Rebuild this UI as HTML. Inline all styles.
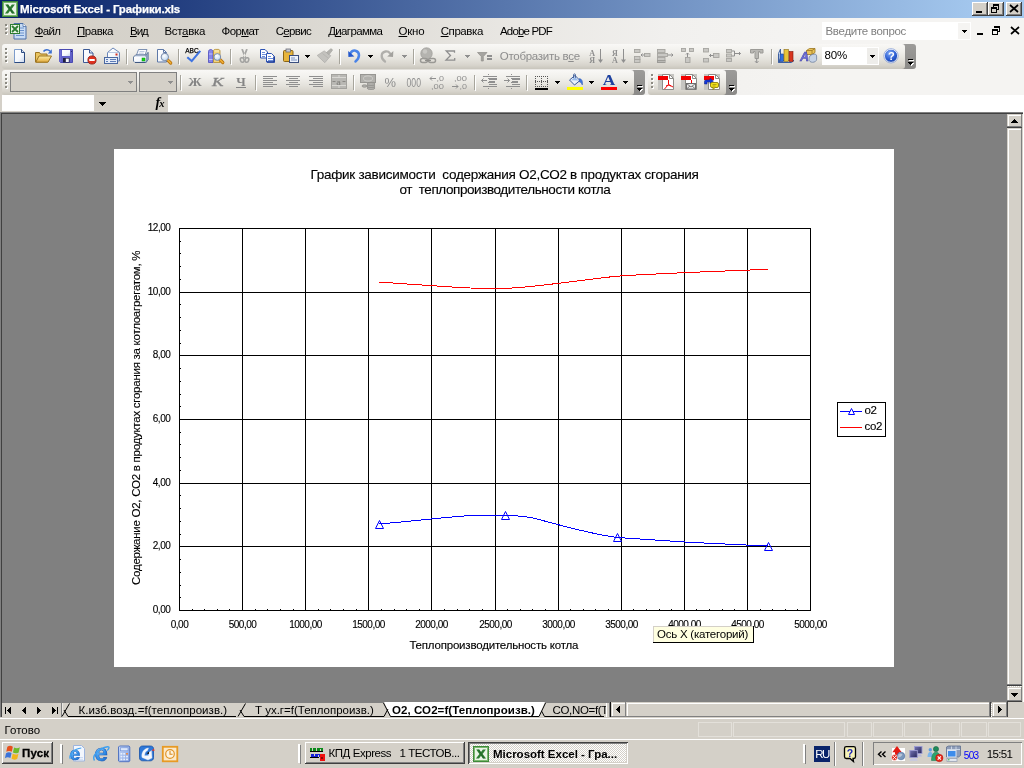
<!DOCTYPE html>
<html lang="ru"><head><meta charset="utf-8"><title>Microsoft Excel - Графики.xls</title>
<style>
html,body{margin:0;padding:0;background:#D4D0C8;}
body{width:1024px;height:768px;overflow:hidden;font-family:"Liberation Sans",sans-serif;font-size:11px;}
#screen{will-change:transform;position:relative;width:1024px;height:768px;overflow:hidden;background:#D4D0C8;}
.a{position:absolute;}
.t{position:absolute;white-space:pre;color:#000;}
.t u{text-decoration:underline;text-underline-offset:1px;}
svg{position:absolute;overflow:visible;}
.ico{position:absolute;width:16px;height:16px;}
.sep{position:absolute;width:1px;background:#A6A398;box-shadow:1px 0 0 #fff;}
.tb{position:absolute;border-radius:3px;background:linear-gradient(#F9F8F6 0%,#F1F0EC 30%,#E5E3DD 60%,#D7D4CC 85%,#C8C5BC 100%);}
.cap{position:absolute;background:linear-gradient(#9C9B99,#8B8A88);border-radius:0 3px 3px 0;}
.grip{position:absolute;width:2px;}
.btn{position:absolute;background:#D4D0C8;box-shadow:inset -1px -1px 0 #404040,inset 1px 1px 0 #fff,inset -2px -2px 0 #808080,inset 2px 2px 0 #D4D0C8;}
.sunk{position:absolute;box-shadow:inset 1px 1px 0 #808080,inset -1px -1px 0 #fff;}

</style></head>
<body>
<div id="screen">
<div class="a" id="titlebar" style="left:0;top:0;width:1024px;height:18px;background:linear-gradient(90deg,#0A246A 0%,#0A246A 2%,#A6CAF0 97%,#A6CAF0 100%);"></div>
<svg style="left:2px;top:1px" width="16" height="16" viewBox="0 0 16 16"><rect x="0" y="0" width="16" height="16" fill="#3E8A3A"/><rect x="1" y="1" width="14" height="14" fill="#7DB870"/><rect x="2" y="2" width="12" height="12" fill="#EAF4E6"/><path d="M3.2 3.5h3l1.8 2.6 1.9-2.6h3L9.6 8l3.5 4.5h-3.1L8 9.8l-2 2.7H2.9L6.4 8z" fill="#2E7D32"/><path d="M4.5 3.5h1.7l5.6 9H10z" fill="#1B5E20" opacity=".55"/></svg>
<span class="t" style="left:20.00px;top:2.20px;font-size:11.5px;line-height:14px;font-weight:bold;color:#fff;letter-spacing:-0.129px;-webkit-text-stroke:0.25px #fff;">Microsoft Excel - Графики.xls</span>
<div class="btn" style="left:972px;top:2px;width:16px;height:14px;"></div>
<div class="btn" style="left:988px;top:2px;width:16px;height:14px;"></div>
<div class="btn" style="left:1006px;top:2px;width:16px;height:14px;"></div>
<svg style="left:972px;top:2px" width="50" height="14" viewBox="0 0 50 14" shape-rendering="crispEdges"><rect x="4" y="9" width="6" height="2" fill="#000"/><path d="M21 2h6v2h-6zM21 4h1v2h-1zM26 4h1v4h-1zM25 7h1v1h-1z M19 5h6v2h-6z M19 7h1v4h-1zM24 7h1v4h-1zM19 10h6v1h-6z" fill="#000"/></svg>
<svg style="left:1006px;top:2px" width="16" height="14" viewBox="0 0 16 14"><path d="M4 3l8 7M12 3l-8 7" stroke="#000" stroke-width="1.7" fill="none"/></svg>
<div class="a" id="dock" style="left:0;top:18px;width:1024px;height:77px;background:linear-gradient(90deg,#D4D0C8 0%,#D7D4CD 25%,#E9E7E3 50%,#F1F0EE 65%,#F5F4F2 80%,#F5F4F2 100%);"></div>
<svg style="left:5px;top:24px" width="3" height="12" viewBox="0 0 3 12" shape-rendering="crispEdges"><g fill="#fff"><rect x="1" y="1" width="2" height="2"/><rect x="1" y="5" width="2" height="2"/><rect x="1" y="9" width="2" height="2"/></g><g fill="#8C8A82"><rect x="0" y="0" width="2" height="2"/><rect x="0" y="4" width="2" height="2"/><rect x="0" y="8" width="2" height="2"/></g></svg>
<svg style="left:10px;top:22px" width="17" height="18" viewBox="0 0 17 18"><path d="M4 1.5h9l3 3V17H4z" fill="#C9DCF5" stroke="#4A6FA8" stroke-width="1"/><path d="M13 1.5v3h3" fill="#fff" stroke="#4A6FA8" stroke-width=".8"/><path d="M9 6h5M9 8.5h5M9 11h5M6 13.5h8" stroke="#6C93CC" stroke-width="1"/><rect x=".5" y="2.5" width="9" height="9" fill="#EAF4E6" stroke="#2E7D32" stroke-width="1"/><path d="M2 4l6 6M8 4l-6 6" stroke="#2E7D32" stroke-width="1.8"/></svg>
<span class="t" style="left:34.75px;top:24.20px;font-size:11.5px;line-height:14px;letter-spacing:-0.691px;"><u>Ф</u>айл</span>
<span class="t" style="left:77.00px;top:24.20px;font-size:11.5px;line-height:14px;letter-spacing:-0.471px;"><u>П</u>равка</span>
<span class="t" style="left:130.00px;top:24.20px;font-size:11.5px;line-height:14px;letter-spacing:-1.032px;"><u>В</u>ид</span>
<span class="t" style="left:164.50px;top:24.20px;font-size:11.5px;line-height:14px;letter-spacing:-0.319px;">Вст<u>а</u>вка</span>
<span class="t" style="left:221.60px;top:24.20px;font-size:11.5px;line-height:14px;letter-spacing:-0.624px;">Фор<u>м</u>ат</span>
<span class="t" style="left:275.70px;top:24.20px;font-size:11.5px;line-height:14px;letter-spacing:-0.679px;">С<u>е</u>рвис</span>
<span class="t" style="left:328.20px;top:24.20px;font-size:11.5px;line-height:14px;letter-spacing:-0.652px;">Д<u>и</u>аграмма</span>
<span class="t" style="left:398.50px;top:24.20px;font-size:11.5px;line-height:14px;letter-spacing:-0.226px;"><u>О</u>кно</span>
<span class="t" style="left:440.70px;top:24.20px;font-size:11.5px;line-height:14px;letter-spacing:-0.416px;"><u>С</u>правка</span>
<span class="t" style="left:500.00px;top:24.20px;font-size:11.5px;line-height:14px;letter-spacing:-0.826px;">Ado<u>b</u>e PDF</span>
<div class="a" style="left:822px;top:22px;width:149px;height:18px;background:#fff;"></div>
<div class="a" style="left:958px;top:23px;width:12px;height:16px;background:#F5F4F2;"></div>
<span class="t" style="left:825.50px;top:24.20px;font-size:11.5px;line-height:14px;color:#808080;letter-spacing:-0.306px;">Введите вопрос</span>
<svg style="left:962px;top:30px" width="5" height="3" viewBox="0 0 5 3" shape-rendering="crispEdges"><path d="M0 0h5v1H0zM1 1h3v1H1zM2 2h1v1H2z" fill="#000"/></svg>
<svg style="left:974px;top:24px" width="48" height="14" viewBox="0 0 48 14" shape-rendering="crispEdges"><rect x="3" y="9" width="6" height="2" fill="#000"/><path d="M20 2h6v2h-6zM25 4h1v4h-1zM24 7h1v1h-1z M18 5h6v2h-6z M18 7h1v4h-1zM23 7h1v4h-1zM18 10h6v1h-6z" fill="#000"/></svg>
<svg style="left:1010px;top:26px" width="10" height="9" viewBox="0 0 10 9"><path d="M1 1l8 7M9 1l-8 7" stroke="#000" stroke-width="1.7" fill="none"/></svg>
<div class="cap" style="left:902px;top:44px;width:14px;height:25px;"></div>
<div class="tb" style="left:2px;top:44px;width:903px;height:25px;"></div>
<div class="cap" style="left:631px;top:70px;width:14px;height:25px;"></div>
<div class="tb" style="left:2px;top:70px;width:632px;height:25px;"></div>
<div class="cap" style="left:723px;top:70px;width:14px;height:25px;"></div>
<div class="tb" style="left:648px;top:70px;width:78px;height:25px;"></div>
<svg style="left:908px;top:59px" width="7" height="8" viewBox="0 0 7 8" shape-rendering="crispEdges"><path d="M1 1h5v1H1z" fill="#fff"/><path d="M0 0h5v1H0z" fill="#000"/><path d="M1 4h5v1H1zM2 5h3v1H2zM3 6h1v1H3z" fill="#fff"/><path d="M0 3h5v1H0zM1 4h3v1H1zM2 5h1v1H2z" fill="#000"/></svg>
<svg style="left:637px;top:85px" width="7" height="8" viewBox="0 0 7 8" shape-rendering="crispEdges"><path d="M1 1h5v1H1z" fill="#fff"/><path d="M0 0h5v1H0z" fill="#000"/><path d="M1 4h5v1H1zM2 5h3v1H2zM3 6h1v1H3z" fill="#fff"/><path d="M0 3h5v1H0zM1 4h3v1H1zM2 5h1v1H2z" fill="#000"/></svg>
<svg style="left:729px;top:85px" width="7" height="8" viewBox="0 0 7 8" shape-rendering="crispEdges"><path d="M1 1h5v1H1z" fill="#fff"/><path d="M0 0h5v1H0z" fill="#000"/><path d="M1 4h5v1H1zM2 5h3v1H2zM3 6h1v1H3z" fill="#fff"/><path d="M0 3h5v1H0zM1 4h3v1H1zM2 5h1v1H2z" fill="#000"/></svg>
<svg style="left:5px;top:48px" width="3" height="16" viewBox="0 0 3 16" shape-rendering="crispEdges"><g fill="#fff"><rect x="1" y="1" width="2" height="2"/><rect x="1" y="5" width="2" height="2"/><rect x="1" y="9" width="2" height="2"/><rect x="1" y="13" width="2" height="2"/></g><g fill="#8C8A82"><rect x="0" y="0" width="2" height="2"/><rect x="0" y="4" width="2" height="2"/><rect x="0" y="8" width="2" height="2"/><rect x="0" y="12" width="2" height="2"/></g></svg>
<svg style="left:5px;top:74px" width="3" height="16" viewBox="0 0 3 16" shape-rendering="crispEdges"><g fill="#fff"><rect x="1" y="1" width="2" height="2"/><rect x="1" y="5" width="2" height="2"/><rect x="1" y="9" width="2" height="2"/><rect x="1" y="13" width="2" height="2"/></g><g fill="#8C8A82"><rect x="0" y="0" width="2" height="2"/><rect x="0" y="4" width="2" height="2"/><rect x="0" y="8" width="2" height="2"/><rect x="0" y="12" width="2" height="2"/></g></svg>
<svg style="left:651px;top:74px" width="3" height="16" viewBox="0 0 3 16" shape-rendering="crispEdges"><g fill="#fff"><rect x="1" y="1" width="2" height="2"/><rect x="1" y="5" width="2" height="2"/><rect x="1" y="9" width="2" height="2"/><rect x="1" y="13" width="2" height="2"/></g><g fill="#8C8A82"><rect x="0" y="0" width="2" height="2"/><rect x="0" y="4" width="2" height="2"/><rect x="0" y="8" width="2" height="2"/><rect x="0" y="12" width="2" height="2"/></g></svg>
<div class="a" style="left:0;top:95px;width:1024px;height:17px;background:#D4D0C8;"></div>
<div class="a" style="left:2px;top:95px;width:92px;height:16px;background:#fff;"></div>
<div class="a" style="left:168px;top:95px;width:856px;height:17px;background:#fff;"></div>
<svg style="left:99px;top:102px" width="7" height="4" viewBox="0 0 7 4" shape-rendering="crispEdges"><path d="M0 0h7v1H0zM1 1h5v1H1zM2 2h3v1H2zM3 3h1v1H3z" fill="#000"/></svg>
<svg style="left:150px;top:95px" width="20" height="16" viewBox="150 95 20 16"><text x="155.500" y="106.500" font-family="Liberation Serif,serif" font-style="italic" font-weight="bold" font-size="14" fill="#000">f</text><text x="159.300" y="106.800" font-family="Liberation Serif,serif" font-style="italic" font-weight="bold" font-size="10.500" fill="#000">x</text></svg>
<div class="a" id="ws" style="left:0;top:112px;width:1024px;height:607px;background:#D4D0C8;"></div>
<div class="a" style="left:0;top:112px;width:1007px;height:591px;background:#808080;"></div>
<div class="a" style="left:0;top:112px;width:1023px;height:1px;background:#808080;"></div><div class="a" style="left:1px;top:113px;width:1022px;height:1px;background:#404040;"></div>
<div class="a" style="left:1px;top:113px;width:1px;height:590px;background:#404040;"></div>
<svg id="icons" style="left:0;top:44px" width="1024" height="52" viewBox="0 44 1024 52"><defs><linearGradient id="gPage" x1="0" y1="0" x2="1" y2="1"><stop offset="0" stop-color="#fff"/><stop offset=".6" stop-color="#F4F7FC"/><stop offset="1" stop-color="#C4D3EC"/></linearGradient><linearGradient id="gFold" x1="0" y1="0" x2="0" y2="1"><stop offset="0" stop-color="#FDEFA8"/><stop offset="1" stop-color="#E2A93A"/></linearGradient><linearGradient id="gBlue" x1="0" y1="0" x2="0" y2="1"><stop offset="0" stop-color="#8FB4F0"/><stop offset="1" stop-color="#2858C0"/></linearGradient><linearGradient id="gGray" x1="0" y1="0" x2="0" y2="1"><stop offset="0" stop-color="#C2C1BD"/><stop offset="1" stop-color="#8E8D89"/></linearGradient><radialGradient id="gHelp" cx=".4" cy=".3" r=".8"><stop offset="0" stop-color="#7FA8F5"/><stop offset=".6" stop-color="#2A5BD0"/><stop offset="1" stop-color="#123A9C"/></radialGradient><radialGradient id="gLens" cx=".4" cy=".35" r=".7"><stop offset="0" stop-color="#fff"/><stop offset="1" stop-color="#B9D3EE"/></radialGradient></defs><path d="M14.5 49.5h7l3 3v10h-10z" fill="url(#gPage)" stroke="#7D9CCB" stroke-width="1"/><path d="M21.5 49.500l3 3v10h-10" fill="none" stroke="#2B4A80" stroke-width="1"/><path d="M21.5 49.500v3h3" fill="#DCE6F7" stroke="#2B4A80" stroke-width="1"/><path d="M35.5 62V52.5h4l1 1.5h6.5v8z" fill="#E9C460" stroke="#9C7420" stroke-width="1"/><path d="M35.8 62.2l3.2-6.2h12.5l-3.5 6.2z" fill="url(#gFold)" stroke="#9C7420" stroke-width="1"/><path d="M43.5 51.5c1.6-2.2 4.8-2.4 6.6-.2" fill="none" stroke="#3B6FD0" stroke-width="1.5"/><path d="M51.8 49.3v4.2h-4z" fill="#3B6FD0"/><path d="M59.500 49.500h13v13h-12l-1-1z" fill="#6060C8" stroke="#4A4AB2" stroke-width="1"/><path d="M60 62v-12" stroke="#7C7CE0" stroke-width="1"/><rect x="62" y="50" width="8" height="6" fill="url(#gPage)"/><rect x="63" y="58" width="6.500" height="4.500" fill="#1E1E3C"/><rect x="65.800" y="58.600" width="3" height="3.400" fill="#F4F6FC"/><rect x="71" y="51" width="1" height="1" fill="#2A2A70"/><path d="M83.5 49.5h6l3.5 3.5v9.5h-9.5z" fill="url(#gPage)" stroke="#3C5A96" stroke-width="1"/><path d="M89.5 49.5v3.5h3.5" fill="#DCE6F7" stroke="#3C5A96" stroke-width="1"/><circle cx="92" cy="60" r="4.1" fill="#E0301E" stroke="#8E1A10" stroke-width=".8"/><rect x="89.3" y="59" width="5.4" height="2" fill="#fff"/><path d="M107.500 52.500l5.500-4.500 6.500 4.500v8.500h-12z" fill="url(#gPage)" stroke="#6B86B8" stroke-width="1"/><path d="M107.500 52.500h12" fill="none" stroke="#9DB2D6" stroke-width=".7"/><rect x="115.500" y="53.500" width="2" height="2" fill="#D83020"/><rect x="104.500" y="57.500" width="13" height="6" fill="#E4ECF8" stroke="#4A68A0" stroke-width="1"/><path d="M106 59.500h2M106 61.500h2M110 59.500h6M110 61.500h6" stroke="#5E7CB8" stroke-width="1"/><rect x="126" y="49" width="1" height="15" fill="#A7A59C"/><rect x="127" y="50" width="1" height="15" fill="#fff"/><path d="M136.500 55l2-5.500h8.500l-2 5.500z" fill="#FBFCFE" stroke="#6F86AC" stroke-width=".9"/><path d="M139.500 51.500h5M138.800 53.200h5" stroke="#A9B9D6" stroke-width=".8"/><path d="M133.500 57l2-2h10.500l2-2.500v7l-2 3h-11l-1.500-1.500z" fill="#DCE5F3" stroke="#566E94" stroke-width=".9"/><path d="M146 55v7.500l2-3v-7z" fill="#9FB1CF" stroke="#566E94" stroke-width=".6"/><path d="M134 57h12v4.500h-12z" fill="url(#gPage)"/><rect x="142" y="58" width="3" height="3" fill="#14DC14" stroke="#0A8C0A" stroke-width=".5"/><path d="M135 62.500h10" stroke="#3F5880" stroke-width="1"/><path d="M157.5 49.5h6l3 3v9.500h-9z" fill="url(#gPage)" stroke="#5E79A8" stroke-width="1"/><path d="M163.500 49.500v3h3" fill="none" stroke="#5E79A8" stroke-width="1"/><path d="M167.500 59.800l3.200 3.200" stroke="#B8720E" stroke-width="3.200" stroke-linecap="round"/><path d="M167.500 59.800l3.200 3.200" stroke="#F2B236" stroke-width="1.600" stroke-linecap="round"/><circle cx="164.800" cy="57" r="3.700" fill="url(#gLens)" stroke="#7B8CAA" stroke-width="1"/><rect x="178" y="49" width="1" height="15" fill="#A7A59C"/><rect x="179" y="50" width="1" height="15" fill="#fff"/><text x="185.200" y="52.600" font-family="Liberation Sans,sans-serif" font-size="6.800" fill="#000" stroke="#000" stroke-width=".25" textLength="13.500" lengthAdjust="spacingAndGlyphs">ABC</text><path d="M187.300 57.300l4.400 3.800 8.600-10.300" fill="none" stroke="#3F74E2" stroke-width="2.100" stroke-linejoin="miter"/><path d="M208.500 51.500c0-1.200 1-2 2.200-2s2.300.8 2.300 2v11h-4.500z" fill="#8686EA" stroke="#4A4ABC" stroke-width=".8"/><path d="M209 54h3.500M209 59.500h3.500" stroke="#C4C4FA" stroke-width="1.100"/><path d="M213.500 51c0-1 .8-1.600 1.800-1.600h2.800c1 0 1.900.6 1.900 1.600v11.500h-6.500z" fill="#F3D47C" stroke="#B18B30" stroke-width=".8"/><path d="M214.500 51h4.500" stroke="#FBEFC4" stroke-width="1"/><path d="M219.800 59.500l3 3" stroke="#B8720E" stroke-width="3.200" stroke-linecap="round"/><path d="M219.800 59.500l3 3" stroke="#F2B236" stroke-width="1.600" stroke-linecap="round"/><circle cx="217.300" cy="57" r="3.400" fill="url(#gLens)" stroke="#7B8CAA" stroke-width="1"/><rect x="230" y="49" width="1" height="15" fill="#A7A59C"/><rect x="231" y="50" width="1" height="15" fill="#fff"/><path d="M241.200 49.300l1.800-.300 3.200 8.500-1.400 1zM247.800 49.300l-1.800-.300-3.200 8.500 1.400 1z" fill="#A6A6A4"/><g fill="none" stroke="#A2A2A0" stroke-width="1.500"><ellipse cx="242.200" cy="60" rx="1.800" ry="2.300" transform="rotate(-18 242.200 60)"/><ellipse cx="246.900" cy="60" rx="1.800" ry="2.300" transform="rotate(18 246.900 60)"/></g><path d="M260.500 49.500h4.500l2.500 2.500v6h-7z" fill="#fff" stroke="#2E54B4" stroke-width="1"/><path d="M262 52.500h3M262 54.500h4M262 56.500h3" stroke="#5D83D8" stroke-width=".9"/><path d="M266.500 53.500h5l3 3v5.500h-8z" fill="#fff" stroke="#2E54B4" stroke-width="1"/><path d="M274 56.500v5.500h-7" fill="none" stroke="#1C3C9C" stroke-width="1.600"/><path d="M268 56.500h3M268 58.500h5M268 60.500h5" stroke="#5D83D8" stroke-width=".9"/><rect x="283.500" y="50.500" width="9.500" height="11" rx="1" fill="#E7B53C" stroke="#8B6516" stroke-width="1"/><rect x="286" y="49" width="4.500" height="3" fill="#C9CBD3" stroke="#6A6C78" stroke-width=".8"/><rect x="289.500" y="55.500" width="9" height="7" fill="#EEF3FB" stroke="#3A4E7E" stroke-width="1"/><path d="M291 58h4M291 60h6" stroke="#6C86B8" stroke-width=".9"/><path d="M305 55h5v1h-5zM306 56h3v1h-3zM307 57h1v1h-1z" fill="#000" shape-rendering="crispEdges"/><path d="M317.200 55.500l7-4.600 6.600 4.800-6 7z" fill="#C3C2BE" stroke="#ACABA7" stroke-width=".7"/><path d="M326.500 52.500l4-3.500c.8-.6 2.300.6 1.800 1.500l-3.300 4.200z" fill="#B3B2AE" stroke="#A3A29E" stroke-width=".6"/><path d="M322.500 53.500l5.500 4.500" stroke="#B0AFAB" stroke-width=".7"/><rect x="339" y="49" width="1" height="15" fill="#A7A59C"/><rect x="340" y="50" width="1" height="15" fill="#fff"/><path d="M355.500 61.500c4.500-3.500 4.800-9.500 0-10.800-2-.5-3.800.5-5 2.500" fill="none" stroke="#4A84E8" stroke-width="2.500" stroke-linecap="round"/><path d="M348.200 51l.2 5.900 6-.3z" fill="#2458CC"/><path d="M368 55h5v1h-5zM369 56h3v1h-3zM370 57h1v1h-1z" fill="#000" shape-rendering="crispEdges"/><path d="M385 61.500c-4.500-3-4.500-9 .5-10 2-.3 3.500.4 4.500 1.800" fill="none" stroke="#B0AFAB" stroke-width="2.300" stroke-linecap="round"/><path d="M393.400 51l-.4 6-5.800-.4z" fill="#A3A29E"/><path d="M402 55h5v1h-5zM403 56h3v1h-3zM404 57h1v1h-1z" fill="#8F8F8F" shape-rendering="crispEdges"/><rect x="413" y="49" width="1" height="15" fill="#A7A59C"/><rect x="414" y="50" width="1" height="15" fill="#fff"/><circle cx="426.500" cy="53.500" r="5.700" fill="#B4B3AF" stroke="#9F9E9A" stroke-width=".8"/><circle cx="425" cy="51.500" r="2.200" fill="#C9C8C4"/><g fill="none" stroke="#9A9995" stroke-width="1.500"><rect x="420.500" y="58.500" width="7" height="4" rx="2"/><rect x="428.500" y="58.500" width="7" height="4" rx="2"/></g><path d="M425 60.500h6" stroke="#8F8E8A" stroke-width="1.300"/><path d="M454.500 52.800v-1.800h-8.300l4.300 4.500-4.500 4.600h8.700v-2" fill="none" stroke="#8F8F8F" stroke-width="1.300"/><path d="M465 55h5v1h-5zM466 56h3v1h-3zM467 57h1v1h-1z" fill="#8F8F8F" shape-rendering="crispEdges"/><path d="M477.500 52.500h9.500l-3.700 4v4.500h-2v-4.500z" fill="#A5A4A0" stroke="#8F8E8A" stroke-width=".7"/><path d="M487 56h5M487 59h5" stroke="#8F8F8F" stroke-width="1.800"/><g font-family="Liberation Serif,serif" font-weight="bold" font-size="8" fill="#8F8F8F"><text x="589.300" y="55.600">А</text><text x="589.300" y="63.200">Я</text><text x="612" y="55.600">Я</text><text x="612" y="63.200">А</text></g><g stroke="#8F8F8F" stroke-width="1" fill="#8F8F8F"><path d="M600.500 49v12"/><path d="M598 59.500h5l-2.500 3.500z" stroke="none"/><path d="M623.500 49v12"/><path d="M621 59.500h5l-2.500 3.500z" stroke="none"/></g><rect x="634.5" y="49.5" width="5.5" height="3.0" fill="#C9C8C4" stroke="#A6A5A1" stroke-width=".9"/><rect x="634.5" y="56.5" width="5.5" height="3.0" fill="#C9C8C4" stroke="#A6A5A1" stroke-width=".9"/><rect x="634.5" y="59.5" width="5.5" height="3.0" fill="#C9C8C4" stroke="#A6A5A1" stroke-width=".9"/><rect x="644.5" y="53.5" width="5.5" height="3.0" fill="#C9C8C4" stroke="#A6A5A1" stroke-width=".9"/><path d="M641 55h3.500M641 55l1.500-1.500M641 55l1.500 1.500" stroke="#8F8F8F" stroke-width="1" fill="none"/><rect x="657.5" y="49.5" width="7.5" height="3.0" fill="#C9C8C4" stroke="#A6A5A1" stroke-width=".9"/><rect x="657.5" y="53.5" width="10.0" height="3.0" fill="#C9C8C4" stroke="#A6A5A1" stroke-width=".9"/><rect x="657.5" y="57.5" width="7.5" height="3.0" fill="#C9C8C4" stroke="#A6A5A1" stroke-width=".9"/><rect x="657.500" y="60.500" width="7.500" height="2" fill="#B9B8B4" stroke="#9C9B97" stroke-width="1"/><path d="M668 55h5M673 55l-1.500-1.500M673 55l-1.500 1.500" stroke="#8F8F8F" stroke-width="1" fill="none"/><rect x="681.5" y="48.5" width="4.0" height="3.0" fill="#C9C8C4" stroke="#A6A5A1" stroke-width=".9"/><rect x="689.5" y="48.5" width="4.0" height="3.0" fill="#C9C8C4" stroke="#A6A5A1" stroke-width=".9"/><rect x="685.5" y="57.5" width="4.5" height="5.0" fill="#C9C8C4" stroke="#A6A5A1" stroke-width=".9"/><path d="M687.500 57v-4M687.500 53l-1.500 1.500M687.500 53l1.500 1.500" stroke="#8F8F8F" stroke-width="1" fill="none"/><rect x="703.5" y="48.5" width="5.0" height="3.5" fill="#C9C8C4" stroke="#A6A5A1" stroke-width=".9"/><rect x="703.5" y="58.5" width="5.0" height="3.5" fill="#C9C8C4" stroke="#A6A5A1" stroke-width=".9"/><rect x="713.5" y="53.5" width="5.5" height="4.0" fill="#C9C8C4" stroke="#A6A5A1" stroke-width=".9"/><path d="M709.500 55.500h4M709.500 55.500l1.500-1.500M709.500 55.500l1.500 1.500" stroke="#8F8F8F" stroke-width="1" fill="none"/><rect x="726.5" y="49.5" width="5.0" height="3.0" fill="#C9C8C4" stroke="#A6A5A1" stroke-width=".9"/><rect x="726.5" y="54.0" width="5.0" height="3.0" fill="#C9C8C4" stroke="#A6A5A1" stroke-width=".9"/><rect x="726.5" y="58.5" width="5.0" height="3.0" fill="#C9C8C4" stroke="#A6A5A1" stroke-width=".9"/><path d="M732 51h2.500v5M732 56h2.500M734.500 53.500h6M740.500 53.500l-1.500-1.500M740.500 53.500l-1.500 1.500" stroke="#8F8F8F" stroke-width="1" fill="none"/><path d="M750.500 49.500h12.500v3.500h-3v-1.500h-1.500v7h-3.500v-7h-1.500v1.500h-3z" fill="#B9B8B4" stroke="#9C9B97" stroke-width="1"/><path d="M756.700 58.500v4M756.700 63l-1.700-1.800M756.700 63l1.700-1.800" stroke="#8F8F8F" stroke-width="1" fill="none"/><rect x="771" y="49" width="1" height="15" fill="#A7A59C"/><rect x="772" y="50" width="1" height="15" fill="#fff"/><path d="M778.500 62.500v-9l2-4.500v9z" fill="#DCE8F8" stroke="#3C5FA0" stroke-width="1"/><path d="M778.500 62.500h13l2.500-2h-13.500z" fill="#C2D4EE" stroke="#3C5FA0" stroke-width="1"/><rect x="780" y="54" width="3.500" height="7.500" fill="#2F6FE0" stroke="#1E3F90" stroke-width=".6"/><rect x="784" y="49.500" width="4.500" height="12" fill="#E8C43A" stroke="#8B6A14" stroke-width=".6"/><rect x="789.200" y="51.500" width="3.800" height="10" fill="#D8351F" stroke="#80180C" stroke-width=".6"/><path d="M806.500 50.500l3-2h5.500v4l-3 2h-5.500z" fill="#E9C25A" stroke="#9A7620" stroke-width=".8"/><path d="M806.500 50.500h5.500v4M812 50.500l3-2" fill="none" stroke="#9A7620" stroke-width=".8"/><path d="M809 58.500c0-2 1.500-3.500 3.800-4.200 2-.5 3.800 0 3.800 1.500v3.500c0 1.800-2 3-4 3-2.200 0-3.600-1.200-3.600-3z" fill="#C5D2E6" stroke="#6E7F9E" stroke-width=".8"/><text x="800" y="61" font-family="Liberation Sans,sans-serif" font-style="italic" font-weight="bold" font-size="12.500" fill="#6A6AD8" stroke="#3C3CA0" stroke-width=".4">A</text><rect x="822" y="47" width="57" height="18" fill="#fff"/><rect x="867" y="48" width="11" height="16" fill="#EEEDEA"/><path d="M870 55h5v1h-5zM871 56h3v1h-3zM872 57h1v1h-1z" fill="#000" shape-rendering="crispEdges"/><circle cx="891" cy="55.800" r="6.600" fill="url(#gHelp)" stroke="#F2F5FC" stroke-width="1"/><circle cx="891" cy="55.800" r="7.200" fill="none" stroke="#5A7CCB" stroke-width=".5"/><text x="888" y="59.800" font-family="Liberation Sans,sans-serif" font-weight="bold" font-size="11" fill="#fff">?</text><rect x="10.500" y="72.500" width="126" height="19" fill="#D4D0C8" stroke="#808080" stroke-width="1"/><rect x="139.500" y="72.500" width="37" height="19" fill="#D4D0C8" stroke="#808080" stroke-width="1"/><path d="M128 81h5v1h-5zM129 82h3v1h-3zM130 83h1v1h-1z" fill="#8F8F8F" shape-rendering="crispEdges"/><path d="M168 81h5v1h-5zM169 82h3v1h-3zM170 83h1v1h-1z" fill="#8F8F8F" shape-rendering="crispEdges"/><rect x="180" y="75" width="1" height="15" fill="#A7A59C"/><rect x="181" y="76" width="1" height="15" fill="#fff"/><g font-family="Liberation Serif,serif" font-weight="bold" font-size="13" fill="#858585"><text x="188.200" y="85.500" textLength="13.500" lengthAdjust="spacingAndGlyphs">Ж</text><text x="212" y="85.500" font-style="italic" font-weight="normal" stroke="#858585" stroke-width=".35" textLength="11.500" lengthAdjust="spacingAndGlyphs">К</text><text x="236.300" y="85.500" textLength="9.500" lengthAdjust="spacingAndGlyphs">Ч</text></g><rect x="236" y="87" width="10" height="1" fill="#858585"/><rect x="255" y="75" width="1" height="15" fill="#A7A59C"/><rect x="256" y="76" width="1" height="15" fill="#fff"/><g fill="#8F8F8F" shape-rendering="crispEdges"><rect x="263" y="76" width="14" height="1"/><rect x="286" y="76" width="14" height="1"/><rect x="309" y="76" width="14" height="1"/><rect x="263" y="78" width="10" height="1"/><rect x="289" y="78" width="9" height="1"/><rect x="313" y="78" width="10" height="1"/><rect x="263" y="80" width="14" height="1"/><rect x="286" y="80" width="14" height="1"/><rect x="309" y="80" width="14" height="1"/><rect x="263" y="82" width="10" height="1"/><rect x="289" y="82" width="9" height="1"/><rect x="313" y="82" width="10" height="1"/><rect x="263" y="84" width="14" height="1"/><rect x="286" y="84" width="14" height="1"/><rect x="309" y="84" width="14" height="1"/><rect x="263" y="86" width="10" height="1"/><rect x="289" y="86" width="9" height="1"/><rect x="313" y="86" width="10" height="1"/></g><rect x="331" y="74" width="16" height="15" fill="#B9B8B4"/><g stroke="#D9D8D4" stroke-width="1" fill="none"><path d="M331 77.500h16M331 85.500h16M339 74v3.500M339 85.500v3.500"/></g><rect x="331.500" y="74.500" width="15" height="14" fill="none" stroke="#A3A29E" stroke-width="1"/><text x="336.300" y="84.500" font-family="Liberation Serif,serif" font-weight="bold" font-size="9" fill="#8A8985">a</text><path d="M332.500 81.500h3M345.500 81.500h-3" stroke="#8A8985" stroke-width="1"/><rect x="353" y="75" width="1" height="15" fill="#A7A59C"/><rect x="354" y="76" width="1" height="15" fill="#fff"/><rect x="360.500" y="74.500" width="15" height="8" fill="#B2B1AD" stroke="#979692" stroke-width="1"/><ellipse cx="368" cy="78.500" rx="4.500" ry="2.600" fill="none" stroke="#D2D1CD" stroke-width="1"/><g fill="#B2B1AD" stroke="#8F8E8A" stroke-width=".8"><ellipse cx="371" cy="88" rx="4" ry="1.500"/><ellipse cx="371" cy="86" rx="4" ry="1.500"/><ellipse cx="371" cy="84" rx="4" ry="1.500"/><ellipse cx="364.500" cy="86" rx="2.500" ry="1.200"/></g><g font-family="Liberation Sans,sans-serif" fill="#8F8F8F"><text x="384.500" y="86.600" font-size="13" textLength="11.500" lengthAdjust="spacingAndGlyphs">%</text><text x="406.500" y="86.800" font-size="12" textLength="14.500" lengthAdjust="spacingAndGlyphs">000</text><text x="436.500" y="80.600" font-size="7.500" textLength="7.500" lengthAdjust="spacingAndGlyphs">,0</text><text x="431" y="88.700" font-size="7.500" textLength="13" lengthAdjust="spacingAndGlyphs">,00</text><text x="454" y="80.600" font-size="7.500" textLength="13" lengthAdjust="spacingAndGlyphs">,00</text><text x="459.500" y="88.700" font-size="7.500" textLength="7.500" lengthAdjust="spacingAndGlyphs">,0</text></g><g stroke="#8F8F8F" stroke-width="1" fill="none"><path d="M430 78.500h6M430 78.500l2-2M430 78.500l2 2"/><path d="M452 86.500h6M458 86.500l-2-2M458 86.500l-2 2"/></g><rect x="474" y="75" width="1" height="15" fill="#A7A59C"/><rect x="475" y="76" width="1" height="15" fill="#fff"/><g fill="#8F8F8F" shape-rendering="crispEdges"><rect x="483" y="76" width="14" height="1"/><rect x="489" y="78" width="8" height="2"/><rect x="489" y="81" width="6" height="2"/><rect x="489" y="84" width="8" height="1"/><rect x="483" y="86" width="14" height="1"/><rect x="488" y="74" width="1" height="1"/><rect x="488" y="78" width="1" height="1"/><rect x="488" y="82" width="1" height="1"/><rect x="488" y="88" width="1" height="1"/><rect x="506" y="76" width="14" height="1"/><rect x="512" y="78" width="8" height="2"/><rect x="512" y="81" width="6" height="2"/><rect x="512" y="84" width="8" height="1"/><rect x="506" y="86" width="14" height="1"/><rect x="511" y="74" width="1" height="1"/><rect x="511" y="78" width="1" height="1"/><rect x="511" y="82" width="1" height="1"/><rect x="511" y="88" width="1" height="1"/></g><g stroke="#8F8F8F" stroke-width="1" fill="none"><path d="M481.500 80.500h5.500M481.500 80.500l2-2M481.500 80.500l2 2"/><path d="M504 80.500h5.500M509.500 80.500l-2-2M509.500 80.500l-2 2"/></g><rect x="526" y="75" width="1" height="15" fill="#A7A59C"/><rect x="527" y="76" width="1" height="15" fill="#fff"/><g fill="#555" shape-rendering="crispEdges"><rect x="535" y="76" width="1" height="1"/><rect x="535" y="81" width="1" height="1"/><rect x="535" y="86" width="1" height="1"/><rect x="537" y="76" width="1" height="1"/><rect x="537" y="81" width="1" height="1"/><rect x="537" y="86" width="1" height="1"/><rect x="539" y="76" width="1" height="1"/><rect x="539" y="81" width="1" height="1"/><rect x="539" y="86" width="1" height="1"/><rect x="541" y="76" width="1" height="1"/><rect x="541" y="81" width="1" height="1"/><rect x="541" y="86" width="1" height="1"/><rect x="543" y="76" width="1" height="1"/><rect x="543" y="81" width="1" height="1"/><rect x="543" y="86" width="1" height="1"/><rect x="545" y="76" width="1" height="1"/><rect x="545" y="81" width="1" height="1"/><rect x="545" y="86" width="1" height="1"/><rect x="547" y="76" width="1" height="1"/><rect x="547" y="81" width="1" height="1"/><rect x="547" y="86" width="1" height="1"/><rect x="535" y="76" width="1" height="1"/><rect x="541" y="76" width="1" height="1"/><rect x="547" y="76" width="1" height="1"/><rect x="535" y="78" width="1" height="1"/><rect x="541" y="78" width="1" height="1"/><rect x="547" y="78" width="1" height="1"/><rect x="535" y="80" width="1" height="1"/><rect x="541" y="80" width="1" height="1"/><rect x="547" y="80" width="1" height="1"/><rect x="535" y="82" width="1" height="1"/><rect x="541" y="82" width="1" height="1"/><rect x="547" y="82" width="1" height="1"/><rect x="535" y="84" width="1" height="1"/><rect x="541" y="84" width="1" height="1"/><rect x="547" y="84" width="1" height="1"/><rect x="535" y="86" width="1" height="1"/><rect x="541" y="86" width="1" height="1"/><rect x="547" y="86" width="1" height="1"/><rect x="535" y="88" width="13" height="2" fill="#000"/></g><path d="M555 81h5v1h-5zM556 82h3v1h-3zM557 83h1v1h-1z" fill="#000" shape-rendering="crispEdges"/><rect x="567" y="87" width="16" height="3" fill="#FFFF00" shape-rendering="crispEdges"/><path d="M569.500 80l5.500-4.500 5 5-5.500 4.500z" fill="#EAF1FB" stroke="#3E5D9A" stroke-width="1"/><path d="M571 80.300l4-3.300 3.500 3.500z" fill="#9CBDEB"/><path d="M573.500 78v-3.200c0-1.200 2-1.200 2 0v3" fill="none" stroke="#3E5D9A" stroke-width=".9"/><path d="M579.500 78.500c2.500.5 3.500 3 2.800 6.500-.8-2-1.800-3-3.300-3.500z" fill="#3F77DE" stroke="#2450B0" stroke-width=".5"/><path d="M589 81h5v1h-5zM590 82h3v1h-3zM591 83h1v1h-1z" fill="#000" shape-rendering="crispEdges"/><rect x="601" y="87" width="16" height="3" fill="#FF0000" shape-rendering="crispEdges"/><text x="602.800" y="85" font-family="Liberation Serif,serif" font-weight="bold" font-size="15.500" fill="#1E419F" textLength="12.500" lengthAdjust="spacingAndGlyphs">A</text><path d="M623 81h5v1h-5zM624 82h3v1h-3zM625 83h1v1h-1z" fill="#000" shape-rendering="crispEdges"/><rect x="658" y="74" width="16" height="16" fill="#C6C5C1"/><path d="M662.5 74.500h7l4 4v11h-11z" fill="#fff" stroke="#8C8B87" stroke-width="1"/><path d="M669.5 74.500v4h4" fill="none" stroke="#8C8B87" stroke-width="1"/><rect x="658" y="76" width="10" height="4" fill="#F20000"/><rect x="681" y="74" width="16" height="16" fill="#C6C5C1"/><path d="M685.5 74.500h7l4 4v11h-11z" fill="#fff" stroke="#8C8B87" stroke-width="1"/><path d="M692.5 74.500v4h4" fill="none" stroke="#8C8B87" stroke-width="1"/><rect x="681" y="76" width="10" height="4" fill="#F20000"/><rect x="704" y="74" width="16" height="16" fill="#C6C5C1"/><path d="M708.5 74.500h7l4 4v11h-11z" fill="#fff" stroke="#8C8B87" stroke-width="1"/><path d="M715.5 74.500v4h4" fill="none" stroke="#8C8B87" stroke-width="1"/><rect x="704" y="76" width="10" height="4" fill="#F20000"/><g stroke="#F20000" stroke-width="1" fill="none"><path d="M668.500 80v4.500M668.500 84.500l-4 4.500M668.500 84.500l4.500 2.500M666 86c1.500-1 3.500-1 5 0"/></g><path d="M691.500 80v3" stroke="#F20000" stroke-width="1"/><rect x="686.500" y="83.500" width="9" height="5.500" fill="#E9E9E9" stroke="#6E6E6E" stroke-width="1"/><path d="M686.500 83.500l4.500 3.500 4.500-3.500M686.500 89l3.500-3M695.500 89l-3.500-3" fill="none" stroke="#6E6E6E" stroke-width=".9"/><path d="M704.500 84v-2.500c0-1 1-1.500 2-1.500h3.500v-1.800l3.500 2.800-3.500 2.800v-1.800h-3v2z" fill="#1438D8" stroke="#0A1E8C" stroke-width=".5"/><rect x="710.500" y="82.500" width="8" height="5" rx="1.500" fill="#F2E21C" stroke="#8A7E0C" stroke-width=".9"/><path d="M713 87.500v2.200l2-2.200" fill="#F2E21C" stroke="#8A7E0C" stroke-width=".8"/><path d="M712.500 84.500h4M712.500 86h3" stroke="#8A7E0C" stroke-width=".6"/></svg>
<span class="t" style="left:499.80px;top:49.20px;font-size:11.5px;line-height:14px;color:#8D8D8D;letter-spacing:-0.283px;">Отобразить в<u>с</u>е</span>
<span class="t" style="left:824.50px;top:48.20px;font-size:11.5px;line-height:14px;letter-spacing:-0.167px;">80%</span>
<div class="a" id="chart" style="left:114px;top:149px;width:780px;height:518px;background:#fff;"></div>
<svg id="plot" style="left:0;top:0" width="1024" height="768" viewBox="0 0 1024 768" shape-rendering="crispEdges"><g fill="#000"><rect x="179" y="228" width="1" height="383"/><rect x="242" y="228" width="1" height="383"/><rect x="305" y="228" width="1" height="383"/><rect x="368" y="228" width="1" height="383"/><rect x="431" y="228" width="1" height="383"/><rect x="495" y="228" width="1" height="383"/><rect x="558" y="228" width="1" height="383"/><rect x="621" y="228" width="1" height="383"/><rect x="684" y="228" width="1" height="383"/><rect x="747" y="228" width="1" height="383"/><rect x="810" y="228" width="1" height="383"/><rect x="179" y="228" width="632" height="1"/><rect x="179" y="292" width="632" height="1"/><rect x="179" y="355" width="632" height="1"/><rect x="179" y="419" width="632" height="1"/><rect x="179" y="483" width="632" height="1"/><rect x="179" y="546" width="632" height="1"/><rect x="179" y="610" width="632" height="1"/><rect x="192" y="609" width="1" height="1"/><rect x="204" y="609" width="1" height="1"/><rect x="217" y="609" width="1" height="1"/><rect x="229" y="609" width="1" height="1"/><rect x="255" y="609" width="1" height="1"/><rect x="267" y="609" width="1" height="1"/><rect x="280" y="609" width="1" height="1"/><rect x="293" y="609" width="1" height="1"/><rect x="318" y="609" width="1" height="1"/><rect x="330" y="609" width="1" height="1"/><rect x="343" y="609" width="1" height="1"/><rect x="356" y="609" width="1" height="1"/><rect x="381" y="609" width="1" height="1"/><rect x="394" y="609" width="1" height="1"/><rect x="406" y="609" width="1" height="1"/><rect x="419" y="609" width="1" height="1"/><rect x="444" y="609" width="1" height="1"/><rect x="457" y="609" width="1" height="1"/><rect x="469" y="609" width="1" height="1"/><rect x="482" y="609" width="1" height="1"/><rect x="507" y="609" width="1" height="1"/><rect x="520" y="609" width="1" height="1"/><rect x="532" y="609" width="1" height="1"/><rect x="545" y="609" width="1" height="1"/><rect x="570" y="609" width="1" height="1"/><rect x="583" y="609" width="1" height="1"/><rect x="595" y="609" width="1" height="1"/><rect x="608" y="609" width="1" height="1"/><rect x="633" y="609" width="1" height="1"/><rect x="646" y="609" width="1" height="1"/><rect x="659" y="609" width="1" height="1"/><rect x="671" y="609" width="1" height="1"/><rect x="696" y="609" width="1" height="1"/><rect x="709" y="609" width="1" height="1"/><rect x="722" y="609" width="1" height="1"/><rect x="734" y="609" width="1" height="1"/><rect x="760" y="609" width="1" height="1"/><rect x="772" y="609" width="1" height="1"/><rect x="785" y="609" width="1" height="1"/><rect x="797" y="609" width="1" height="1"/><rect x="180" y="241" width="1" height="1"/><rect x="180" y="253" width="1" height="1"/><rect x="180" y="266" width="1" height="1"/><rect x="180" y="279" width="1" height="1"/><rect x="180" y="304" width="1" height="1"/><rect x="180" y="317" width="1" height="1"/><rect x="180" y="330" width="1" height="1"/><rect x="180" y="343" width="1" height="1"/><rect x="180" y="368" width="1" height="1"/><rect x="180" y="381" width="1" height="1"/><rect x="180" y="394" width="1" height="1"/><rect x="180" y="406" width="1" height="1"/><rect x="180" y="432" width="1" height="1"/><rect x="180" y="444" width="1" height="1"/><rect x="180" y="457" width="1" height="1"/><rect x="180" y="470" width="1" height="1"/><rect x="180" y="495" width="1" height="1"/><rect x="180" y="508" width="1" height="1"/><rect x="180" y="521" width="1" height="1"/><rect x="180" y="534" width="1" height="1"/><rect x="180" y="559" width="1" height="1"/><rect x="180" y="572" width="1" height="1"/><rect x="180" y="585" width="1" height="1"/><rect x="180" y="597" width="1" height="1"/></g><path d="M379 282 C400 283.5 440 286.5 470 288 C490 288.6 505 288.4 512 288 C540 286.5 585 279.5 617 276.2 C650 273.8 700 272 768 269.3" fill="none" stroke="#FF0000" stroke-width="1"/><path d="M379 524 C400 522.5 440 517.5 470 515.6 C485 515.2 495 515.3 505 515.5 C515 515.6 525 516 535 518.5 C560 525 590 534 617 537.5 C650 540 700 543.5 768 546" fill="none" stroke="#0000FF" stroke-width="1"/><path d="M379.5 520.5L375.5 528.5L383.5 528.5Z" fill="none" stroke="#0000FF" stroke-width="1" shape-rendering="auto"/><path d="M505.5 511.5L501.5 519.5L509.5 519.5Z" fill="none" stroke="#0000FF" stroke-width="1" shape-rendering="auto"/><path d="M617.5 533.5L613.5 541.5L621.5 541.5Z" fill="none" stroke="#0000FF" stroke-width="1" shape-rendering="auto"/><path d="M768.5 542.5L764.5 550.5L772.5 550.5Z" fill="none" stroke="#0000FF" stroke-width="1" shape-rendering="auto"/><rect x="837.5" y="402.5" width="48" height="34" fill="#fff" stroke="#000" stroke-width="1"/><rect x="840" y="411" width="22" height="1" fill="#0000FF"/><rect x="840" y="427" width="22" height="1" fill="#FF0000"/><path d="M851.5 408.5L848.5 414.5L854.5 414.5Z" fill="#fff" stroke="#0000FF" stroke-width="1" shape-rendering="auto"/></svg>
<span class="t" style="left:310.40px;top:166.04px;font-size:13.5px;line-height:17px;letter-spacing:-0.268px;-webkit-text-stroke:0.12px #000;">График зависимости  содержания О2,СО2 в продуктах сгорания</span>
<span class="t" style="left:399.50px;top:181.04px;font-size:13.5px;line-height:17px;letter-spacing:-0.419px;-webkit-text-stroke:0.12px #000;">от  теплопроизводительности котла</span>
<span class="t" style="left:170.75px;top:618.70px;font-size:10px;line-height:12px;letter-spacing:-0.492px;-webkit-text-stroke:0.12px #000;">0,00</span>
<span class="t" style="left:228.75px;top:618.70px;font-size:10px;line-height:12px;letter-spacing:-0.516px;-webkit-text-stroke:0.12px #000;">500,00</span>
<span class="t" style="left:289.25px;top:618.70px;font-size:10px;line-height:12px;letter-spacing:-0.522px;-webkit-text-stroke:0.12px #000;">1000,00</span>
<span class="t" style="left:352.25px;top:618.70px;font-size:10px;line-height:12px;letter-spacing:-0.522px;-webkit-text-stroke:0.12px #000;">1500,00</span>
<span class="t" style="left:415.25px;top:618.70px;font-size:10px;line-height:12px;letter-spacing:-0.522px;-webkit-text-stroke:0.12px #000;">2000,00</span>
<span class="t" style="left:479.25px;top:618.70px;font-size:10px;line-height:12px;letter-spacing:-0.522px;-webkit-text-stroke:0.12px #000;">2500,00</span>
<span class="t" style="left:542.25px;top:618.70px;font-size:10px;line-height:12px;letter-spacing:-0.522px;-webkit-text-stroke:0.12px #000;">3000,00</span>
<span class="t" style="left:605.25px;top:618.70px;font-size:10px;line-height:12px;letter-spacing:-0.522px;-webkit-text-stroke:0.12px #000;">3500,00</span>
<span class="t" style="left:668.25px;top:618.70px;font-size:10px;line-height:12px;letter-spacing:-0.522px;-webkit-text-stroke:0.12px #000;">4000,00</span>
<span class="t" style="left:731.25px;top:618.70px;font-size:10px;line-height:12px;letter-spacing:-0.522px;-webkit-text-stroke:0.12px #000;">4500,00</span>
<span class="t" style="left:794.25px;top:618.70px;font-size:10px;line-height:12px;letter-spacing:-0.522px;-webkit-text-stroke:0.12px #000;">5000,00</span>
<span class="t" style="left:147.80px;top:221.69px;font-size:10px;line-height:12px;letter-spacing:-0.506px;-webkit-text-stroke:0.12px #000;">12,00</span>
<span class="t" style="left:147.80px;top:285.69px;font-size:10px;line-height:12px;letter-spacing:-0.506px;-webkit-text-stroke:0.12px #000;">10,00</span>
<span class="t" style="left:152.80px;top:348.69px;font-size:10px;line-height:12px;letter-spacing:-0.492px;-webkit-text-stroke:0.12px #000;">8,00</span>
<span class="t" style="left:152.80px;top:412.69px;font-size:10px;line-height:12px;letter-spacing:-0.492px;-webkit-text-stroke:0.12px #000;">6,00</span>
<span class="t" style="left:152.80px;top:476.69px;font-size:10px;line-height:12px;letter-spacing:-0.492px;-webkit-text-stroke:0.12px #000;">4,00</span>
<span class="t" style="left:152.80px;top:539.70px;font-size:10px;line-height:12px;letter-spacing:-0.492px;-webkit-text-stroke:0.12px #000;">2,00</span>
<span class="t" style="left:152.80px;top:603.70px;font-size:10px;line-height:12px;letter-spacing:-0.492px;-webkit-text-stroke:0.12px #000;">0,00</span>
<span class="t" style="left:409.40px;top:638.20px;font-size:11.5px;line-height:14px;letter-spacing:-0.192px;-webkit-text-stroke:0.12px #000;">Теплопроизводительность котла</span>
<span class="t" style="left:141px;top:585px;font-size:11.5px;line-height:13px;-webkit-text-stroke:0.12px #000;transform-origin:0 0;transform:rotate(-90deg) translate(0,-11px);letter-spacing:-0.261px">Содержание О2, СО2 в продуктах сгорания за котлоагрегатом, %</span>
<span class="t" style="left:864.60px;top:403.20px;font-size:11.5px;line-height:14px;letter-spacing:-0.391px;-webkit-text-stroke:0.12px #000;">o2</span>
<span class="t" style="left:864.60px;top:419.20px;font-size:11.5px;line-height:14px;letter-spacing:-0.344px;-webkit-text-stroke:0.12px #000;">co2</span>
<div class="a" style="left:653px;top:626px;width:100px;height:16px;background:#FFFFE1;border-right:1px solid #000;border-bottom:1px solid #000;box-shadow:inset 1px 1px 0 #D4D0C8;"></div>
<span class="t" style="left:657.00px;top:627.20px;font-size:11.5px;line-height:14px;letter-spacing:-0.229px;">Ось X (категорий)</span>
<div class="a" style="left:1007px;top:114px;width:15px;height:588px;background:#D4D0C8;"></div>
<div class="a" style="left:1007px;top:114px;width:15px;height:14px;background:#D4D0C8;box-shadow:inset 0 -1px 0 #404040,inset -1px -2px 0 #808080,inset 1px 1px 0 #D4D0C8,inset 2px 2px 0 #fff;"></div>
<div class="a" style="left:1007px;top:128px;width:15px;height:558px;background:#D4D0C8;box-shadow:inset 0 -1px 0 #404040,inset -1px -2px 0 #808080,inset 1px 1px 0 #D4D0C8,inset 2px 2px 0 #fff;"></div>
<div class="a" style="left:1007px;top:686px;width:15px;height:1px;background:repeating-conic-gradient(#fff 0% 25%,#D4D0C8 0% 50%) 0 0/2px 2px;"></div>
<div class="a" style="left:1007px;top:687px;width:15px;height:15px;background:#D4D0C8;box-shadow:inset 0 -1px 0 #404040,inset -1px -2px 0 #808080,inset 1px 1px 0 #D4D0C8,inset 2px 2px 0 #fff;"></div>
<svg style="left:1011px;top:119px" width="7" height="4" viewBox="0 0 7 4" shape-rendering="crispEdges"><path d="M3 0h1v1H3zM2 1h3v1H2zM1 2h5v1H1zM0 3h7v1H0z" fill="#000"/></svg>
<svg style="left:1011px;top:693px" width="7" height="4" viewBox="0 0 7 4" shape-rendering="crispEdges"><path d="M0 0h7v1H0zM1 1h5v1H1zM2 2h3v1H2zM3 3h1v1H3z" fill="#000"/></svg>
<div class="a" style="left:1023px;top:112px;width:1px;height:606px;background:#fff;"></div>
<div class="a" style="left:0;top:702px;width:1024px;height:17px;background:#D4D0C8;"></div>
<div class="a" style="left:0;top:702px;width:1px;height:15px;background:#808080;"></div><div class="a" style="left:1px;top:702px;width:1px;height:15px;background:#404040;"></div>
<div class="a" style="left:2px;top:702px;width:1005px;height:1px;background:#808080;"></div>
<div class="a" style="left:0;top:717px;width:1024px;height:2px;background:linear-gradient(#D4D0C8 50%,#fff 50%);"></div>
<div class="a" style="left:61px;top:703px;width:1px;height:14px;background:#808080;"></div><div class="a" style="left:62px;top:703px;width:1px;height:14px;background:#EAE8E3;"></div>
<svg style="left:5px;top:707px" width="56" height="7" viewBox="0 0 56 7" shape-rendering="crispEdges"><g fill="#000"><rect x="0" y="0" width="1" height="7"/><path d="M5 0h1v7H5zM4 1h1v5H4zM3 2h1v3H3zM2 3h1v1H2z"/><path d="M20 0h1v7h-1zM19 1h1v5h-1zM18 2h1v3h-1zM17 3h1v1h-1z"/><path d="M32 0h1v7h-1zM33 1h1v5h-1zM34 2h1v3h-1zM35 3h1v1h-1z"/><path d="M47 0h1v7h-1zM48 1h1v5h-1zM49 2h1v3h-1zM50 3h1v1h-1z"/><rect x="52" y="0" width="1" height="7"/></g></svg>
<svg style="left:0;top:702px" width="640" height="16" viewBox="0 0 640 16"><path d="M384 0L391 14.5L539 14.5L545 0Z" fill="#fff"/><g stroke="#000" stroke-width="1" fill="none"><path d="M62 14.5L69.5 1.5"/><path d="M64 8L68 14.5L236 14.5"/><path d="M238 14.5L245.5 1.5"/><path d="M240 8L244 14.5L384 14.5L388 7"/><path d="M383.5 1L390.5 14.5L539 14.5L545.5 1"/><path d="M541.5 9L544.5 14.5L604 14.5"/></g></svg>
<span class="t" style="left:78.50px;top:703.20px;font-size:11.5px;line-height:14px;letter-spacing:0.065px;">К.изб.возд.=f(теплопроизв.)</span>
<span class="t" style="left:255.00px;top:703.20px;font-size:11.5px;line-height:14px;letter-spacing:-0.009px;">Т ух.г=f(Теплопроизв.)</span>
<span class="t" style="left:392.00px;top:703.20px;font-size:11.5px;line-height:14px;font-weight:bold;letter-spacing:0.074px;">О2, СО2=f(Теплопроизв.)</span>
<div class="a" style="left:552px;top:703px;width:53.5px;height:13px;overflow:hidden;"><span class="t" style="left:0.40px;top:0.20px;font-size:11.5px;line-height:14px;letter-spacing:-0.310px;">CO,NO=f(Теплопроизв.)</span></div>
<div class="a" style="left:606px;top:703px;width:402px;height:14px;background:#D4D0C8;"></div>
<div class="a" style="left:606px;top:703px;width:1px;height:14px;background:#fff;"></div><div class="a" style="left:609px;top:702px;width:1px;height:15px;background:#808080;"></div><div class="a" style="left:610px;top:702px;width:1px;height:15px;background:#101010;"></div>
<div class="a" style="left:611px;top:702px;width:15px;height:15px;background:#D4D0C8;box-shadow:inset -1px -1px 0 #808080,inset 1px 1px 0 #D4D0C8,inset 2px 2px 0 #fff;"></div>
<div class="a" style="left:626px;top:702px;width:365px;height:15px;background:#D4D0C8;box-shadow:inset -1px 0 0 #404040,inset -2px -1px 0 #808080,inset 1px 1px 0 #D4D0C8,inset 2px 2px 0 #fff;"></div>
<div class="a" style="left:991px;top:703px;width:1px;height:14px;background:repeating-conic-gradient(#fff 0% 25%,#D4D0C8 0% 50%) 0 0/2px 2px;"></div>
<div class="a" style="left:992px;top:702px;width:16px;height:15px;background:#D4D0C8;box-shadow:inset -1px 0 0 #404040,inset -2px -1px 0 #808080,inset 1px 1px 0 #D4D0C8,inset 2px 2px 0 #fff;"></div>
<svg style="left:616px;top:706px" width="4" height="7" viewBox="0 0 4 7" shape-rendering="crispEdges"><path d="M3 0h1v7H3zM2 1h1v5H2zM1 2h1v3H1zM0 3h1v1H0z" fill="#000"/></svg>
<svg style="left:998px;top:706px" width="4" height="7" viewBox="0 0 4 7" shape-rendering="crispEdges"><path d="M0 0h1v7H0zM1 1h1v5H1zM2 2h1v3H2zM3 3h1v1H3z" fill="#000"/></svg>
<div class="a" style="left:0;top:719px;width:1024px;height:20px;background:#D4D0C8;"></div>
<span class="t" style="left:4.50px;top:723.20px;font-size:11.5px;line-height:14px;letter-spacing:0.031px;">Готово</span>
<div class="a" style="left:698px;top:722px;width:32px;height:13px;border:1px solid #E3E0DA;"></div>
<div class="a" style="left:733px;top:722px;width:110px;height:13px;border:1px solid #E3E0DA;"></div>
<div class="a" style="left:847px;top:722px;width:23px;height:13px;border:1px solid #E3E0DA;"></div>
<div class="a" style="left:873px;top:722px;width:28px;height:13px;border:1px solid #E3E0DA;"></div>
<div class="a" style="left:904px;top:722px;width:24px;height:13px;border:1px solid #E3E0DA;"></div>
<div class="a" style="left:931px;top:722px;width:27px;height:13px;border:1px solid #E3E0DA;"></div>
<div class="a" style="left:961px;top:722px;width:24px;height:13px;border:1px solid #E3E0DA;"></div>
<div class="a" style="left:988px;top:722px;width:31px;height:13px;border:1px solid #E3E0DA;"></div>
<div class="a" style="left:0;top:739px;width:1024px;height:1px;background:#fff;"></div>
<div class="a" style="left:0;top:740px;width:1024px;height:28px;background:#D4D0C8;"></div>
<div class="btn" style="left:2px;top:742px;width:51px;height:22px;"></div>
<svg style="left:4.500px;top:744px" width="18" height="17" viewBox="0 0 17 16"><path d="M2.2 2.6c1.8-1.2 3.6-1.1 5.2 0L6.4 7.4c-1.7-1-3.4-1-5.2 0z" fill="#E8501C"/><path d="M8.6 3.2c1.8 1 3.6 1 5.4-.1l-1.1 4.8c-1.8 1.1-3.6 1.1-5.4.1z" fill="#6DBB2A"/><path d="M1 8.6c1.8-1.1 3.5-1.1 5.2-.1L5.1 13.3c-1.7-1-3.4-1-5.2.1z" fill="#3B73D9"/><path d="M7.3 9.2c1.8 1 3.6 1 5.4-.1l-1.1 4.8c-1.8 1.1-3.6 1.1-5.4.1z" fill="#F2B51D"/></svg>
<span class="t" style="left:22.00px;top:746.20px;font-size:11.5px;line-height:14px;font-weight:bold;letter-spacing:0.196px;-webkit-text-stroke:0.3px #000;">Пуск</span>
<div class="a" style="left:60px;top:744px;width:2px;height:19px;background:#fff;"></div><div class="a" style="left:62px;top:745px;width:1px;height:19px;background:#808080;"></div>
<div class="a" style="left:298px;top:744px;width:2px;height:19px;background:#fff;"></div><div class="a" style="left:300px;top:745px;width:1px;height:19px;background:#808080;"></div>
<div class="a" style="left:803px;top:744px;width:2px;height:19px;background:#fff;"></div><div class="a" style="left:805px;top:745px;width:1px;height:19px;background:#808080;"></div>
<div class="btn" style="left:305px;top:742px;width:160px;height:22px;"></div>
<span class="t" style="left:328.50px;top:746.20px;font-size:11.5px;line-height:14px;letter-spacing:-0.438px;">КПД Express   1 ТЕСТОВ...</span>
<div class="a" style="left:468px;top:742px;width:160px;height:22px;background:repeating-conic-gradient(#fff 0% 25%,#D4D0C8 0% 50%) 0 0/2px 2px;box-shadow:inset 1px 1px 0 #404040,inset -1px -1px 0 #fff,inset 2px 2px 0 #808080,inset -2px -2px 0 #D4D0C8;"></div>
<span class="t" style="left:493.00px;top:747.20px;font-size:11.5px;line-height:14px;font-weight:bold;letter-spacing:-0.009px;">Microsoft Excel - Гра...</span>
<div class="a" style="left:814px;top:746px;width:16px;height:16px;background:#0A246A;"></div>
<span class="t" style="left:815.30px;top:747.20px;font-size:11.5px;line-height:14px;color:#fff;letter-spacing:-1.562px;">RU</span>
<div class="a" style="left:834px;top:742px;width:1px;height:24px;background:#808080;"></div><div class="a" style="left:835px;top:742px;width:1px;height:24px;background:#fff;"></div>
<div class="a" style="left:862px;top:742px;width:1px;height:24px;background:#808080;"></div><div class="a" style="left:863px;top:742px;width:1px;height:24px;background:#fff;"></div>
<div class="sunk" style="left:873px;top:742px;width:149px;height:23px;"></div>
<span class="t" style="left:986.80px;top:747.20px;font-size:11.5px;line-height:14px;letter-spacing:-0.650px;">15:51</span>
<span class="t" style="left:963.80px;top:749.70px;font-size:10px;line-height:12px;color:#0000FF;letter-spacing:-0.729px;">503</span>
<svg id="tbicons" style="left:0;top:740px" width="1024" height="28" viewBox="0 740 1024 28"><defs><radialGradient id="gIE" cx=".4" cy=".35" r=".75"><stop offset="0" stop-color="#8FD0FF"/><stop offset=".55" stop-color="#2F8DE8"/><stop offset="1" stop-color="#1658B8"/></radialGradient><linearGradient id="gCalc" x1="0" y1="0" x2="1" y2="1"><stop offset="0" stop-color="#CBDBF8"/><stop offset="1" stop-color="#7C9CE0"/></linearGradient><linearGradient id="gMon" x1="0" y1="0" x2="1" y2="1"><stop offset="0" stop-color="#7474B4"/><stop offset="1" stop-color="#26265A"/></linearGradient></defs><path d="M73.5 745.5h8l3 3v12.500h-11z" fill="#F2F6FD" stroke="#9DB4DE" stroke-width="1"/><path d="M75 757.500h8M75 759.300h8" stroke="#C3D3EF" stroke-width=".8"/><text x="69.800" y="760" font-family="Liberation Sans,sans-serif" font-weight="bold" font-size="19" fill="url(#gIE)" stroke="#1D63C2" stroke-width=".5">e</text><path d="M70.300 759c-2-4 4-10.500 11-11" fill="none" stroke="#3FA0F0" stroke-width="1.200"/><text x="94.500" y="761" font-family="Liberation Sans,sans-serif" font-weight="bold" font-size="24" fill="url(#gIE)" stroke="#1658B8" stroke-width=".5">e</text><path d="M94.500 760.500c-3-4 4-12.500 13-13.800 2.500-.2 1.500 2.300-.3 3.800" fill="none" stroke="#3FA0F0" stroke-width="1.400"/><path d="M118.500 747l1-1h9.500l.8 1v14l-.8.700h-9.500l-1-.700z" fill="url(#gCalc)" stroke="#5476C2" stroke-width="1"/><rect x="120.500" y="747.800" width="7.500" height="3" fill="#DCE8FC" stroke="#6F8FD6" stroke-width=".6"/><g fill="#E9F0FD"><rect x="120.500" y="753" width="1.800" height="1.600"/><rect x="123.300" y="753" width="1.800" height="1.600"/><rect x="120.500" y="755.800" width="1.800" height="1.600"/><rect x="123.300" y="755.800" width="1.800" height="1.600"/><rect x="126.100" y="755.800" width="1.800" height="1.600"/><rect x="120.500" y="758.600" width="1.800" height="1.600"/><rect x="123.300" y="758.600" width="1.800" height="1.600"/><rect x="126.100" y="758.600" width="1.800" height="1.600"/></g><rect x="126.100" y="753" width="1.800" height="1.600" fill="#F08A3C"/><path d="M139.500 749c0-2 1.500-3 3-3h8c1.700 0 3 1 3 2.800v9c0 1.800-1.300 3-3 3h-8c-1.500 0-3-1-3-3z" fill="#2E78D8" stroke="#1450A8" stroke-width=".8"/><path d="M142 757.500c-1-5 2-9 6.500-9.500l-1 2.500c-2 .8-3 3-2.800 5.200l3.800-.2 .5-3 2.500-2 .5 7.500-4 2z" fill="#F4F7FC" stroke="#DDE6F5" stroke-width=".4"/><path d="M146.500 753.500l2.500-2v2.500z" fill="#1A1A1A"/><path d="M151.500 750.500l2.500-2 .5 2.500z" fill="#E03A2A"/><rect x="162.800" y="746.800" width="14.500" height="14.500" fill="#FBE8C8" stroke="#E79A24" stroke-width="1.800"/><circle cx="170" cy="754" r="4.300" fill="#FDF3DF" stroke="#E0952A" stroke-width="1.200"/><path d="M170 751v3.200h2.600" fill="none" stroke="#D88A22" stroke-width="1.100"/><g shape-rendering="crispEdges"><rect x="310" y="748" width="13" height="3" fill="#0A8A1A"/><rect x="312" y="748" width="1" height="3" fill="#D4D0C8"/><rect x="316" y="748" width="1" height="3" fill="#D4D0C8"/><rect x="320" y="749" width="1" height="2" fill="#D4D0C8"/><rect x="310" y="751" width="13" height="1" fill="#000"/><rect x="311" y="754" width="12" height="3" fill="#1420D8"/><rect x="314" y="754" width="1" height="2" fill="#D4D0C8"/><rect x="318" y="755" width="1" height="2" fill="#D4D0C8"/><rect x="310" y="757" width="9" height="1" fill="#000"/><rect x="320" y="754" width="5" height="7" fill="#F01010"/><rect x="321" y="757" width="2" height="2" fill="#8A0A0A"/></g><g transform="translate(473,746)"><rect x="0" y="0" width="16" height="16" fill="#3E8A3A"/><rect x="1" y="1" width="14" height="14" fill="#7DB870"/><rect x="2" y="2" width="12" height="12" fill="#EAF4E6"/><path d="M3.200 3.500h3l1.800 2.600 1.900-2.600h3L9.600 8l3.500 4.500h-3.100L8 9.800l-2 2.700H2.900L6.400 8z" fill="#2E7D32"/><path d="M4.500 3.500h1.700l5.600 9H10z" fill="#1B5E20" opacity=".55"/></g><path d="M844.500 748.500c0-1 .8-1.800 1.800-1.800h7.400c1 0 1.800.8 1.800 1.800v8.200c0 1-.8 1.800-1.800 1.800h-.7l.5 3-3.500-3h-3.700c-1 0-1.800-.8-1.800-1.800z" fill="#F6F2B8" stroke="#000" stroke-width="1.300"/><text x="846.800" y="757.300" font-family="Liberation Sans,sans-serif" font-weight="bold" font-size="10.500" fill="#1A22B8">?</text><path d="M881.500 751.500l-3 2.700 3 2.700M885.500 751.500l-3 2.700 3 2.700" fill="none" stroke="#000" stroke-width="1.400"/><rect x="892" y="748" width="13" height="13" fill="#fff"/><path d="M892.300 752.200l4.700-6.200 4.700 6.200h-2.700v3.300h-4v-3.300z" fill="#E21A12"/><circle cx="901" cy="756" r="3.800" fill="#7C98BC" stroke="#4A6A9C" stroke-width=".6"/><path d="M898.500 754c1.500-1 3-.5 4 .5-1 2-2.500 3-4.500 3z" fill="#B9C6D8"/><circle cx="894.500" cy="757.500" r="2.900" fill="#E22A1C" stroke="#fff" stroke-width=".6"/><path d="M893.200 756.200l2.600 2.600M895.800 756.200l-2.600 2.600" stroke="#fff" stroke-width="1"/><rect x="914.500" y="746.500" width="7.500" height="7" fill="url(#gMon)" stroke="#9C9CD2" stroke-width=".9"/><path d="M916 754.500h5l1 2h-7z" fill="#B8B8DC"/><rect x="909.800" y="750.500" width="7.500" height="7" fill="url(#gMon)" stroke="#9C9CD2" stroke-width=".9"/><path d="M911 758.500h5.500l1.200 2.200h-8z" fill="#C4C8E4"/><circle cx="930.300" cy="749.800" r="1.700" fill="#5C9CE0"/><path d="M927.500 757c0-3 1-5 2.800-5s2.700 2 2.700 5z" fill="#79B4EC"/><circle cx="936" cy="749" r="2.600" fill="#1E8A5A" stroke="#0E5C3A" stroke-width=".5"/><path d="M931.500 760.500c0-5 1.600-8.300 4.500-8.300s4.700 3.300 4.700 8.300z" fill="#2EA46C" stroke="#12724A" stroke-width=".5"/><circle cx="939.300" cy="758" r="3.700" fill="#E6281A" stroke="#B01208" stroke-width=".5"/><path d="M937.700 756.400l3.200 3.200M940.900 756.400l-3.200 3.200" stroke="#fff" stroke-width="1.200"/><path d="M946.500 747l2-1h12v9.500l-2 1.500h-12z" fill="#8E9CB8" stroke="#5E6E8E" stroke-width=".8"/><path d="M947 749.500h13M951.500 746.500v3M956 746.500v3" stroke="#DCE4F0" stroke-width=".8"/><rect x="947.500" y="750.500" width="8.500" height="6.500" fill="#3E8CEB" stroke="#DDE5F2" stroke-width="1"/><rect x="947" y="758.500" width="10" height="2.800" fill="#E4E9F2" stroke="#8C98B0" stroke-width=".7"/><rect x="948" y="759.300" width="1.500" height="1" fill="#2CB42C"/></svg>
</div>
</body></html>
